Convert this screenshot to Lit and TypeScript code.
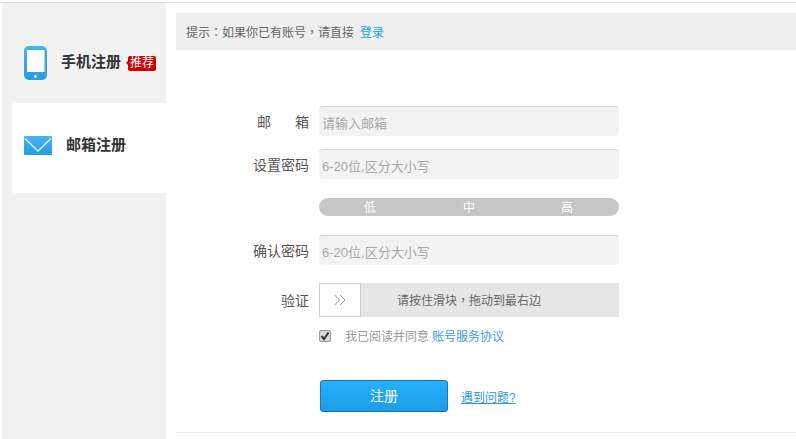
import { LitElement, html, css } from "lit";
import { customElement } from "lit/decorators.js";

@customElement("app-root")
export class AppRoot extends LitElement {
  static styles = css`
    :host { display: block; width: 796px; height: 439px; overflow: hidden; background: #fff; box-sizing: border-box; padding-top: 2px;
      font-family: "Liberation Sans", "Noto Sans CJK SC", sans-serif; font-size: 13px; color: #666; }
    * { box-sizing: border-box; }
    .top { height: 1px; background: #ddd; }
    .page { display: flex; height: 436px; }
    .side { width: 164px; margin-left: 2px; background: #f2f2f2; padding: 100px 0 0 10px; position: relative; flex: none; }
    .tab { display: flex; align-items: center; font-weight: 700; font-size: 15px; color: #333; }
    .phone { position: absolute; left: 10px; top: 43px; height: 34px; right: 0; }
    .phone-icon { margin-left: 12px; flex: none; }
    .phone-text { margin-left: 14px; position: relative; top: -3px; }
    .badge { position: relative; margin-left: 7px; width: 28px; height: 15px; background: #d00000; border-radius: 2px; color: #fff; font-size: 12px; font-weight: 400; line-height: 15px; text-align: center; }
    .badge::before { content: ""; position: absolute; left: -2px; top: 5px; border: 2.5px solid transparent; border-left: 0; border-right: 2px solid #d00000; }
    .mail { height: 90px; width: 154px; background: #fff; border-radius: 4px 0 0 4px; padding-bottom: 5px; }
    .mail-icon { margin-left: 12px; flex: none; }
    .mail-text { margin-left: 14px; position: relative; top: -2px; }
    .main { margin-left: 10px; flex: 1; display: flex; flex-direction: column; padding-top: 10px; }
    .notice { height: 37px; background: #efefef; padding-left: 10px; display: flex; align-items: center; color: #666; font-size: 12px; white-space: pre; }
    .notice a { color: #1ea0e6; margin-left: 6px; text-decoration: none; }
    .p { font-family: "Noto Sans CJK TC", sans-serif; }
    .form { margin-top: 56px; display: grid; grid-template-columns: 133px 300px; column-gap: 10px; align-items: center; justify-content: start; }
    .label { text-align: right; font-size: 14px; color: #555; }
    .email-label { display: flex; justify-content: flex-end; }
    .email-label span { width: 52px; display: flex; justify-content: space-between; }
    .email-label b { font-weight: 400; }
    .input { height: 30px; background: #f3f3f3; border-top: 1px solid #d6d6d6; border-radius: 4px; padding-left: 3px; line-height: 33px; color: #a8a8a8; font-size: 13px; }
    .r2 { margin-top: 13px; }
    .bar { grid-column: 2; margin-top: 19px; height: 18px; background: #c6c6c6; border-radius: 9px; display: grid; grid-template-columns: 102px 96px 100px; color: #fff; font-size: 12px; line-height: 20px; text-align: center; }
    .r3 { margin-top: 19px; }
    .r4 { margin-top: 18px; }
    .slider { height: 34px; background: #e6e6e6; display: flex; align-items: center; color: #666; font-size: 12px; }
    .handle { width: 42px; height: 34px; background: #fff; border: 1px solid #ccc; display: flex; align-items: center; justify-content: center; flex: none; }
    .slider-text { flex: 1; text-align: center; padding-right: 42px; position: relative; top: -1px; }
    .agree { grid-column: 2; margin-top: 11px; height: 16px; display: flex; align-items: center; color: #999; font-size: 12px; }
    .check { width: 12px; height: 12px; background: #d8d8d8; border: 1px solid #9a9a9a; border-radius: 2px; flex: none; margin-right: 14px; display: flex; align-items: center; justify-content: center; }
    .agree-text { position: relative; top: -1px; }
    .agree a { color: #3d9be0; margin-left: 3px; text-decoration: none; }
    .actions { grid-column: 2; margin-top: 36px; display: flex; align-items: center; padding-left: 1px; }
    .btn { width: 128px; height: 32px; border: 1px solid #1379b8; border-radius: 3px; background: linear-gradient(#27b0fc, #1e9be6); color: #fff; font-size: 14px; text-align: center; line-height: 31px; }
    .help { margin-left: 13px; color: #2d9be0; text-decoration: underline; font-size: 12px; }
    .spacer { flex: 1; }
    .rule { height: 1px; background: #ebebeb; margin-bottom: 6px; }
  `;

  render() {
    return html`
      <div class="top"></div>
      <div class="page">
        <div class="side">
          <div class="tab phone">
            <svg class="phone-icon" width="23" height="34" viewBox="0 0 23 34">
              <defs><linearGradient id="g1" x1="0" y1="0" x2="0" y2="1"><stop offset="0" stop-color="#45b4f5"/><stop offset="1" stop-color="#2b9be0"/></linearGradient></defs>
              <rect width="23" height="34" rx="5" fill="url(#g1)"/>
              <rect x="3" y="4" width="17.500" height="22" fill="#fff"/>
              <circle cx="11.500" cy="30.500" r="1.400" fill="#fff"/>
            </svg>
            <span class="phone-text">手机注册</span>
            <span class="badge">推荐</span>
          </div>
          <div class="tab mail">
            <svg class="mail-icon" width="28" height="19" viewBox="0 0 28 19">
              <defs><linearGradient id="g2" x1="0" y1="0" x2="0" y2="1"><stop offset="0" stop-color="#45b4f5"/><stop offset="1" stop-color="#2b9be0"/></linearGradient></defs>
              <rect width="28" height="19" rx="1" fill="url(#g2)"/>
              <path d="M1 2.500 L14 15 L27 2.500" fill="none" stroke="#dff1fc" stroke-width="1.400"/>
            </svg>
            <span class="mail-text">邮箱注册</span>
          </div>
        </div>
        <div class="main">
          <div class="notice"><span>提示<span class="p">：</span>如果你已有账号<span class="p">，</span>请直接</span><a>登录</a></div>
          <div class="form">
            <div class="label email-label"><span><b>邮</b><b>箱</b></span></div>
            <div class="input">请输入邮箱</div>
            <div class="label r2">设置密码</div>
            <div class="input r2">6-20位,区分大小写</div>
            <div class="bar"><span>低</span><span>中</span><span>高</span></div>
            <div class="label r3">确认密码</div>
            <div class="input r3">6-20位,区分大小写</div>
            <div class="label r4">验证</div>
            <div class="slider r4">
              <div class="handle">
                <svg width="14" height="12" viewBox="0 0 14 12"><path d="M1.500 1 L6.500 6 L1.500 11 M7 1 L12 6 L7 11" fill="none" stroke="#a98f8f" stroke-width="1"/></svg>
              </div>
              <div class="slider-text">请按住滑块<span class="p">，</span>拖动到最右边</div>
            </div>
            <div class="agree">
              <span class="check"><svg width="10" height="10" viewBox="0 0 10 10"><path d="M1.500 5 L4 8 L8.500 1.500" fill="none" stroke="#333" stroke-width="2"/></svg></span>
              <span class="agree-text">我已阅读并同意<a>账号服务协议</a></span>
            </div>
            <div class="actions"><div class="btn">注册</div><a class="help">遇到问题?</a></div>
          </div>
          <div class="spacer"></div>
          <div class="rule"></div>
        </div>
      </div>
    `;
  }
}
